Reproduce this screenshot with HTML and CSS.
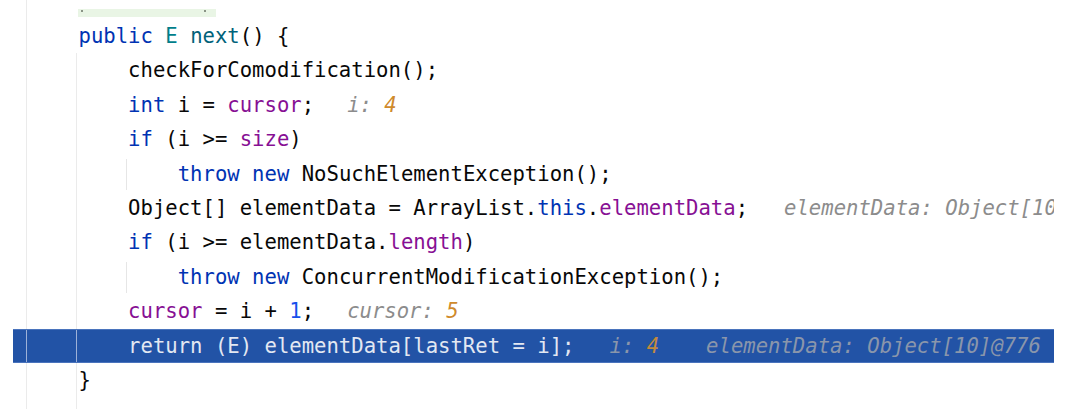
FILE: index.html
```html
<!DOCTYPE html>
<html>
<head>
<meta charset="utf-8">
<link rel="stylesheet" href="styles.css">
</head>
<body>
<div class="editor">
  <div class="prev"><div class="diff"><span class="dot"></span><span class="dot"></span></div></div>
  <div class="line"><span class="kw">public</span> <span class="tp">E</span> <span class="md">next</span>() {</div>
  <div class="line">    checkForComodification();</div>
  <div class="line">    <span class="kw">int</span> i = <span class="fd">cursor</span>;<span class="hint"><span class="hn">i:</span> <span class="hv">4</span></span></div>
  <div class="line">    <span class="kw">if</span> (i &gt;= <span class="fd">size</span>)</div>
  <div class="line guide">        <span class="kw">throw new</span> NoSuchElementException();</div>
  <div class="line">    Object[] elementData = ArrayList.<span class="kw">this</span>.<span class="fd">elementData</span>;<span class="hint wide"><span class="hn">elementData: Object[10]@776</span></span></div>
  <div class="line">    <span class="kw">if</span> (i &gt;= elementData.<span class="fd">length</span>)</div>
  <div class="line guide">        <span class="kw">throw new</span> ConcurrentModificationException();</div>
  <div class="line">    <span class="fd">cursor</span> = i + <span class="num">1</span>;<span class="hint"><span class="hn">cursor:</span> <span class="hv">5</span></span></div>
  <div class="line current">    return (E) elementData[lastRet = i];<span class="hint cur"><span class="hn">i:</span> <span class="hv">4</span></span><span class="hint cur second"><span class="hn">elementData: Object[10]@776</span></span></div>
  <div class="line">}</div>
</div>
</body>
</html>
```

FILE: styles.css
```css
html, body {
  margin: 0;
  padding: 0;
  background: #ffffff;
}

body {
  width: 1079px;
  height: 409px;
  overflow: hidden;
}

.editor {
  width: 1054px;
  height: 409px;
  overflow: hidden;
  font-family: "DejaVu Sans Mono", "Liberation Mono", monospace;
  font-size: 20.6px;
  color: #080808;
  background:
    linear-gradient(#ebebeb, #ebebeb) 26px 0 / 1px 100% no-repeat,
    linear-gradient(#ebebeb, #ebebeb) 76px 53px / 1px 100% no-repeat,
    #ffffff;
}

.prev {
  height: 19px;
  display: flex;
  align-items: flex-start;
}

.diff {
  margin: 9px 0 0 78px;
  width: 138px;
  height: 8px;
  background: #e9f5e5;
  display: flex;
  justify-content: space-between;
  padding: 1px 10px 0 3px;
  box-sizing: border-box;
}

.dot {
  width: 2px;
  height: 2px;
  background: #8a9486;
}

.line {
  height: 34.4px;
  line-height: 34.4px;
  margin-left: 13px;
  padding-left: 65.5px;
  white-space: pre;
}

.guide {
  background: linear-gradient(#e6e6e6, #e6e6e6) 113px 2px / 1px 31px no-repeat;
}

.kw { color: #0033b3; }
.fd { color: #871094; }
.md { color: #00627a; }
.tp { color: #007e8a; }
.num { color: #1750eb; }

.hint {
  margin-left: 33px;
  font-style: italic;
}

.hint.wide {
  margin-left: 36px;
}

.hn { color: #8c8c8c; }
.hv { color: #cf8a2c; }

.current {
  color: #e3e8f2;
  background:
    linear-gradient(#9db1d8, #9db1d8) 13px 0 / 1px 100% no-repeat,
    linear-gradient(#9db1d8, #9db1d8) 63px 0 / 1px 100% no-repeat,
    #2253a6;
  box-shadow: inset 0 1px #4a74bd, inset 0 -1px #4a74bd;
}

.current .hint { margin-left: 35px; }
.current .hint.second { margin-left: 47px; }
.current .hn { color: #8a96ab; }
.current .hv { color: #c38a3c; }
```
